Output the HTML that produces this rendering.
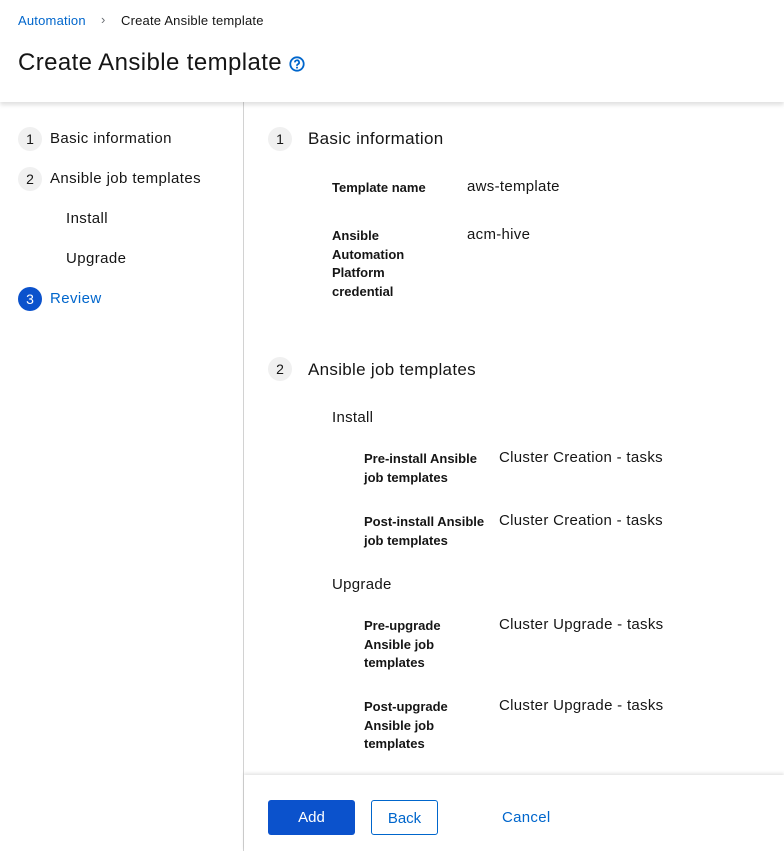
<!DOCTYPE html>
<html><head><style>
body{margin:0;width:784px;height:851px;position:relative;font-family:"Liberation Sans",sans-serif;color:#151515;background:#fff;overflow:hidden}
.a{position:absolute;white-space:nowrap}
.hdr{position:absolute;left:0;top:0;width:784px;height:102px;background:#fff;box-shadow:0 3px 4px rgba(0,0,0,.12);z-index:2}
.side{position:absolute;left:0;top:102px;width:243px;height:749px;border-right:1px solid #d2d2d2}
.c{position:absolute;width:24px;height:24px;border-radius:50%;background:#f0f0f0;font-size:14px;text-align:center;line-height:24px;color:#151515}
.n{font-size:15px;letter-spacing:.4px}
.lb{font-size:13px;font-weight:bold;line-height:18.5px;white-space:normal}
.v{font-size:15px;letter-spacing:.3px}
.h{font-size:17px;letter-spacing:.3px}
</style></head><body>
<div class="hdr">
<div class="a" style="left:18px;top:13px;font-size:13px;color:#0066cc;letter-spacing:.2px">Automation</div>
<div class="a" style="left:101px;top:12px;font-size:13px;color:#6a6e73">›</div>
<div class="a" style="left:121px;top:13px;font-size:13px;letter-spacing:.2px">Create Ansible template</div>
<div class="a" style="left:18px;top:49px;font-size:24px;letter-spacing:.4px">Create Ansible template</div>
<svg class="a" style="left:289px;top:56px" width="16" height="16" viewBox="0 0 16 16"><circle cx="8" cy="8" r="6.7" fill="none" stroke="#0066cc" stroke-width="1.8"/><path d="M5.9 6.4a2.1 2.1 0 1 1 2.9 1.9c-.6.3-.8.6-.8 1.2v.4" fill="none" stroke="#0066cc" stroke-width="1.7"/><circle cx="8" cy="11.6" r="1" fill="#0066cc"/></svg>
</div>
<div class="side"></div>
<div class="c" style="left:18px;top:127px">1</div><div class="a n" style="left:50px;top:130px">Basic information</div>
<div class="c" style="left:18px;top:167px">2</div><div class="a n" style="left:50px;top:170px">Ansible job templates</div>
<div class="a n" style="left:66px;top:210px">Install</div>
<div class="a n" style="left:66px;top:250px">Upgrade</div>
<div class="c" style="left:18px;top:287px;background:#0b52cc;color:#fff">3</div><div class="a n" style="left:50px;top:290px;color:#0066cc">Review</div>

<div class="c" style="left:268px;top:127px">1</div><div class="a h" style="left:308px;top:129px">Basic information</div>
<div class="a lb" style="left:332px;top:179px">Template name</div><div class="a v" style="left:467px;top:178px">aws-template</div>
<div class="a lb" style="left:332px;top:227px;width:110px">Ansible Automation Platform credential</div><div class="a v" style="left:467px;top:226px">acm-hive</div>

<div class="c" style="left:268px;top:357px">2</div><div class="a h" style="left:308px;top:360px">Ansible job templates</div>
<div class="a v" style="left:332px;top:409px">Install</div>
<div class="a lb" style="left:364px;top:450px;width:130px">Pre-install Ansible job templates</div><div class="a v" style="left:499px;top:449px">Cluster Creation - tasks</div>
<div class="a lb" style="left:364px;top:513px;width:130px">Post-install Ansible job templates</div><div class="a v" style="left:499px;top:512px">Cluster Creation - tasks</div>
<div class="a v" style="left:332px;top:576px">Upgrade</div>
<div class="a lb" style="left:364px;top:617px;width:100px">Pre-upgrade Ansible job templates</div><div class="a v" style="left:499px;top:616px">Cluster Upgrade - tasks</div>
<div class="a lb" style="left:364px;top:698px;width:100px">Post-upgrade Ansible job templates</div><div class="a v" style="left:499px;top:697px">Cluster Upgrade - tasks</div>

<div class="a" style="left:244px;top:775px;width:540px;height:76px;background:#fff;box-shadow:0 -2px 3px rgba(0,0,0,.1)"></div>
<div class="a" style="left:268px;top:800px;width:87px;height:35px;background:#0b52cc;border-radius:3px;color:#fff;font-size:15px;text-align:center;line-height:36px">Add</div>
<div class="a" style="left:371px;top:800px;width:65px;height:33px;border:1px solid #0066cc;border-radius:3px;color:#0066cc;font-size:15px;text-align:center;line-height:35px">Back</div>
<div class="a" style="left:502px;top:809px;color:#0066cc;font-size:15px;letter-spacing:.3px">Cancel</div>
</body></html>
